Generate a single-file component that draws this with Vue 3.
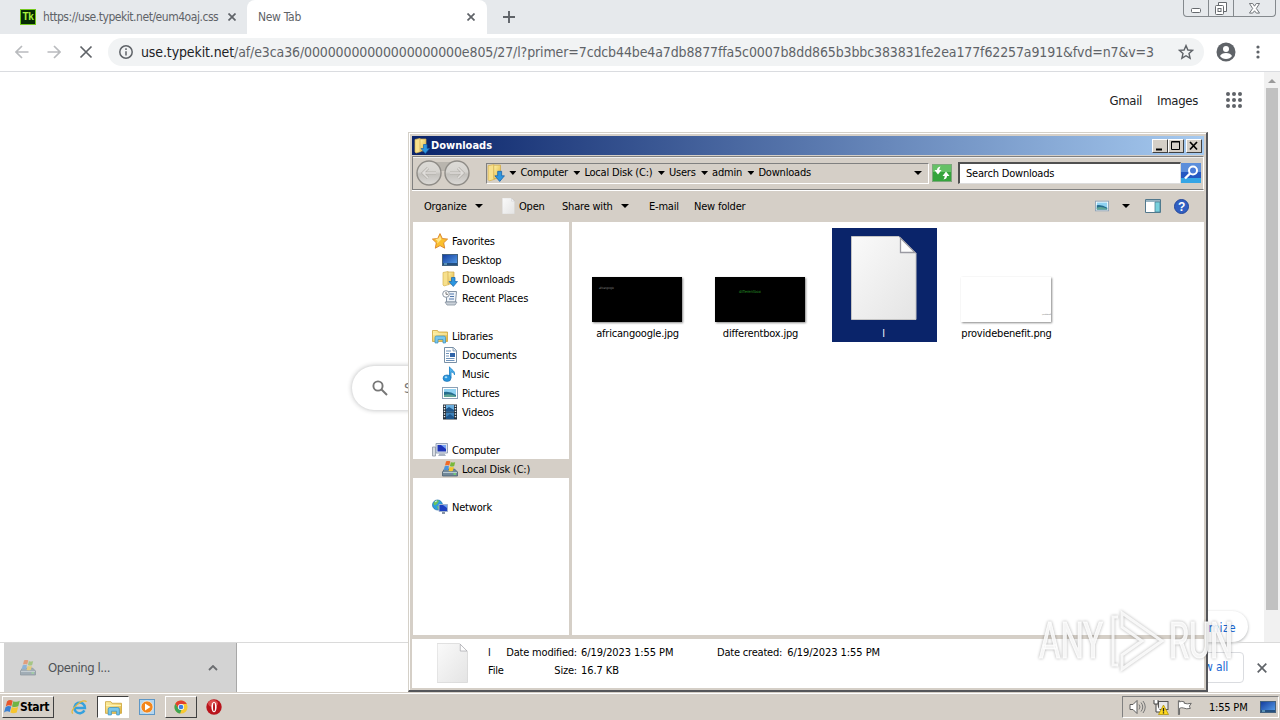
<template>
  <div class="screen">
    <svg class="icon-defs" xmlns="http://www.w3.org/2000/svg">
      <defs>
        <linearGradient id="gold" x1="0" y1="0" x2="1" y2="1">
          <stop offset="0" stop-color="#fff3a8" />
          <stop offset="1" stop-color="#dfb13c" />
        </linearGradient>
        <linearGradient id="paper" x1="0" y1="0" x2="1" y2="1">
          <stop offset="0" stop-color="#fafafa" />
          <stop offset="1" stop-color="#e4e4e4" />
        </linearGradient>
        <linearGradient id="blue" x1="0" y1="0" x2="1" y2="1">
          <stop offset="0" stop-color="#123a9c" />
          <stop offset="1" stop-color="#5aa5ee" />
        </linearGradient>
        <linearGradient id="orb" x1="0" y1="0" x2="0" y2="1">
          <stop offset="0" stop-color="#dddbd7" />
          <stop offset=".45" stop-color="#d6d4d0" />
          <stop offset=".55" stop-color="#c3c1bd" />
          <stop offset="1" stop-color="#dcdad7" />
        </linearGradient>
      </defs>
      <symbol id="i-star" viewBox="0 0 16 16">
        <path d="M8 .6l2.3 4.9 5.3.6-3.9 3.7 1 5.4L8 12.6l-4.7 2.6 1-5.4L.4 6.1l5.3-.6z" fill="#fbc02d" stroke="#d9822b" stroke-width=".9" />
        <path d="M8 2.8l1.5 3.4-4.4 4.6.5-2.9-2.4-2 3.2-.4z" fill="#ffe58a" />
      </symbol>
      <symbol id="i-desktop" viewBox="0 0 16 16">
        <rect x=".5" y="2.5" width="15" height="11" fill="url(#blue)" stroke="#42617e" />
        <path d="M1 11h14v2H1z" fill="#245080" />
        <path d="M2 11.5h3v1H2z" fill="#8fd0e8" />
      </symbol>
      <symbol id="i-downloads" viewBox="0 0 16 16">
        <path d="M1 1.5l5-1 1 1v12l-5 1.500-1-1z" fill="#f7e08c" stroke="#d7b451" stroke-width=".7" />
        <path d="M6 1h6v12H6z" fill="url(#gold)" stroke="#cfa84a" stroke-width=".7" />
        <path d="M9.500 6.500h3.500v4h2.500L11.300 15.500 7 10.500h2.500z" fill="#2d96e0" stroke="#1764ac" stroke-width=".7" />
      </symbol>
      <symbol id="i-recent" viewBox="0 0 16 16">
        <path d="M4.500 1.500h10l-1 10.500h-9z" fill="#eef3f8" stroke="#8694a4" />
        <path d="M3 12h12l-2 3H5z" fill="#cbd2da" stroke="#8792a0" stroke-width=".8" />
        <path d="M8 4h4M8 6.500h4M7 9h5" stroke="#5076ac" stroke-width="1.200" />
        <circle cx="4" cy="4" r="3.300" fill="#fff" stroke="#8d97a3" />
        <path d="M4 2v2.300h2" stroke="#555" fill="none" stroke-width=".8" />
      </symbol>
      <symbol id="i-library" viewBox="0 0 16 16">
        <path d="M.5 2.500h5l1 1.500h9v9.500H.5z" fill="url(#gold)" stroke="#cda53d" stroke-width=".8" />
        <path d="M1 6h14" stroke="#fff5b8" />
        <path d="M3 15V9.500q0-1.500 1.500-1.500h7.500q1.500 0 1.500 1.500V15h-2.500v-3.500h-5V15z" fill="#78c6ec" stroke="#3990bf" stroke-width=".7" />
      </symbol>
      <symbol id="i-document" viewBox="0 0 16 16">
        <path d="M2.500.5h9l3 3v12h-12z" fill="#fff" stroke="#7990a6" />
        <path d="M11 .5v3.500h3.500" fill="#dce6f0" stroke="#7990a6" stroke-width=".8" />
        <path d="M4 4h5M4 6.500h3M4 9h3M4 11.500h8.500M4 13.500h8.500" stroke="#6f93ba" />
        <path d="M8 6h5v4H8z" fill="#2f64a8" />
      </symbol>
      <symbol id="i-music" viewBox="0 0 16 16">
        <path d="M7.500 12V.8c1.200 3 5.500 3.200 5 8-.5-2-2-2.800-3.500-3V12z" fill="#4db1ec" stroke="#2387cb" stroke-width=".9" />
        <ellipse cx="5" cy="12.200" rx="4" ry="3.300" fill="#2794dc" stroke="#186cac" stroke-width=".6" />
        <ellipse cx="4" cy="11.300" rx="1.400" ry="1" fill="#a6dcf8" />
      </symbol>
      <symbol id="i-picture" viewBox="0 0 16 16">
        <rect x=".5" y="2.500" width="15" height="11" fill="#fff" stroke="#8ba1b6" />
        <path d="M2 4h12v8H2z" fill="#8fd2f2" />
        <path d="M2 7q6-1 12 3v2H2z" fill="#246c8d" />
        <path d="M2 10q5-2 12 1v1H2z" fill="#5fa595" />
      </symbol>
      <symbol id="i-video" viewBox="0 0 16 16">
        <path d="M1 .5h14v15H1z" fill="#25303b" />
        <path d="M4 1h8v6.500H4z" fill="#6aaede" />
        <path d="M4 8.500h8V15H4z" fill="#3f82ba" />
        <path d="M4 5l3-2 5 3v1.500H4zM4 13l4-3 4 3v2H4z" fill="#1d568c" />
        <path d="M2.500 1.500v13M13.500 1.500v13" stroke="#e8edf2" stroke-width="1.400" stroke-dasharray="1.400 1.200" />
      </symbol>
      <symbol id="i-computer" viewBox="0 0 16 16">
        <path d="M.5 5h3v9h-3z" fill="#d9dde3" stroke="#8d95a2" stroke-width=".8" />
        <path d="M4 1.500h11.500V11H4z" fill="#dfe5ee" stroke="#8c9ab0" stroke-width=".9" />
        <path d="M5.500 3H14v6.500H5.500z" fill="#1d34b8" />
        <path d="M9 3h5v4z" fill="#7aa5f4" />
        <path d="M7.500 11.500h5l1.500 2.500H6z" fill="#aab4c2" />
      </symbol>
      <symbol id="i-disk" viewBox="0 0 16 16">
        <path d="M2.500 8h10l3 3v4H.5v-4z" fill="#71899a" stroke="#4c616f" stroke-width=".8" />
        <path d="M1 11.500h14" stroke="#b7c8d2" />
        <path d="M11.500 13h2.500" stroke="#75e06d" stroke-width="1.400" />
        <path d="M4 .5q2.200-1.500 4.300 0L7.200 4.500Q5 3.500 3 4.500z" fill="#ef6b28" />
        <path d="M8.900.9q2.200 1 4.300 0l-1 4q-2.200 1-4.300 0z" fill="#78b83a" />
        <path d="M2.700 5.300q2.200-1.200 4.300 0L6 9.300q-2.200-1-4.300 0z" fill="#4a94dc" />
        <path d="M7.600 5.700q2.200 1 4.300 0l-1 4q-2.200 1-4.300 0z" fill="#f7c62b" />
      </symbol>
      <symbol id="i-network" viewBox="0 0 16 16">
        <circle cx="5.500" cy="6" r="5" fill="#2e9cdd" stroke="#1b6ea8" stroke-width=".7" />
        <path d="M3 2q3-1.500 4 0L5 5 2.500 6.500q-2-2 .5-4.500zM5 7l3 1-2 2.800z" fill="#6cc45c" />
        <path d="M3 3q1-1 2-1" stroke="#d9f5ff" />
        <path d="M7 5.500h8.500v7H7z" fill="#1c3fc0" stroke="#9fb1cc" />
        <path d="M11 6h4v3z" fill="#6d9df0" />
        <path d="M10 13h3v2h-3z" fill="#8793a6" />
      </symbol>
      <symbol id="i-flag4" viewBox="0 0 16 16">
        <path d="M3 2.500q2.500-2.500 5.700-.8L7.400 7Q4.500 5.500 1.800 7.500z" fill="#e8562a" />
        <path d="M9.300 2.200q3.200 1.500 6.500-.4l-1.500 5.400q-3.200 1.500-6.300.2z" fill="#71b443" />
        <path d="M1.500 8.200q2.700-2 5.700-.6L5.800 13Q3 11.500 0 13.500z" fill="#3a80d2" />
        <path d="M7.800 8.100q3.200 1.300 6.300-.2l-1.400 5.500q-3.200 1.400-6.300.2z" fill="#f7c52e" />
      </symbol>
      <symbol id="i-page" viewBox="0 0 66 84">
        <path d="M.5.5H48L65 17.500V83.500H.5z" fill="url(#paper)" stroke="#c4c4c4" />
        <path d="M49.500 2v14.500H64z" fill="#fdfdfd" stroke="#9a9aa2" stroke-width="1.300" />
      </symbol>
    </svg>

    <!-- browser -->
    <div class="browser">
      <div class="tab-strip">
        <div class="tab tab-first">
          <span class="tk">Tk</span>
          <span class="tab-title tab-title-url">https://use.typekit.net/eum4oaj.css</span>
          <svg class="tab-close" viewBox="0 0 8 8"><path d="M.5.5l7 7M7.500.5l-7 7" /></svg>
        </div>
        <div class="tab tab-active">
          <span class="tab-title">New Tab</span>
          <svg class="tab-close" viewBox="0 0 8 8"><path d="M.5.5l7 7M7.500.5l-7 7" /></svg>
        </div>
        <svg class="tab-plus" viewBox="0 0 12 12"><path d="M6 0v12M0 6h12" /></svg>
        <div class="window-buttons">
          <span class="wb wb-min"><svg width="10" height="5" viewBox="0 0 10 5"><rect x=".5" y=".5" width="9" height="4" rx="1" /></svg></span>
          <span class="wb wb-max"><svg width="12" height="13" viewBox="0 0 12 13"><path d="M3.500 3.500v-3h8v9h-3" /><rect x=".5" y="3.500" width="8" height="9" rx="1" /><rect x="3" y="6.500" width="3" height="3" /></svg></span>
          <span class="wb wb-close"><svg width="11" height="11" viewBox="0 0 12 12"><path d="M.5.500h3.500l2 3 2-3h3.500L8 6l3.500 5H8L6 8.500 4 11H.5L4 6z" /></svg></span>
        </div>
      </div>

      <div class="nav-bar">
        <svg class="nav-icon faded" viewBox="0 0 14 14"><path d="M13.500 7H1M7 1L1 7l6 6" /></svg>
        <svg class="nav-icon faded" viewBox="0 0 14 14"><path d="M.5 7H13M7 1l6 6-6 6" /></svg>
        <svg class="nav-icon" viewBox="0 0 14 14"><path d="M1.500 1.500l11 11M12.500 1.500l-11 11" /></svg>
        <div class="omnibox">
          <svg class="info-icon" viewBox="0 0 14 14">
            <circle cx="7" cy="7" r="6.200" />
            <path d="M7 6.200v4.300M7 3.300v1.600" />
          </svg>
          <span class="url"><span class="host">use.typekit.net</span>/af/e3ca36/00000000000000000000e805/27/l?primer=7cdcb44be4a7db8877ffa5c0007b8dd865b3bbc383831fe2ea177f62257a9191&amp;fvd=n7&amp;v=3</span>
          <svg class="bookmark" viewBox="0 0 16 16"><path d="M8 1.600l1.900 4.400 4.700.4-3.600 3.100 1.100 4.700L8 11.700l-4.100 2.500L5 9.500 1.400 6.400l4.700-.4z" /></svg>
        </div>
        <svg class="avatar" viewBox="0 0 20 20">
          <circle cx="10" cy="10" r="9.500" fill="#5f6368" />
          <circle cx="10" cy="7" r="3" fill="#fff" />
          <path d="M4 14q1.500-3 6-3t6 3q-2 3-6 3t-6-3z" fill="#fff" />
        </svg>
        <svg class="kebab" viewBox="0 0 4 14"><circle cx="2" cy="2" r="1.600" /><circle cx="2" cy="7" r="1.600" /><circle cx="2" cy="12" r="1.600" /></svg>
      </div>

      <div class="page">
        <div class="page-body">
          <div class="page-links">
            <span class="gmail">Gmail</span>
            <span class="images">Images</span>
            <svg class="apps" viewBox="0 0 16 16">
              <circle v-for="n in 9" :key="n" :cx="2 + ((n - 1) % 3) * 6" :cy="2 + Math.floor((n - 1) / 3) * 6" r="2" />
            </svg>
          </div>
          <div class="search-pill">
            <svg class="magnifier" viewBox="0 0 16 16"><circle cx="6" cy="6" r="4.600" /><path d="M9.500 9.500l5.500 5.500" /></svg>
            <span>S</span>
          </div>
          <div class="customize">Customize</div>
        </div>
        <div class="scrollbar">
          <span class="scroll-arrow"></span>
          <span class="scroll-thumb"></span>
        </div>
      </div>

      <div class="shelf">
        <div class="shelf-item">
          <svg class="shelf-icon"><use href="#i-disk" /></svg>
          <span>Opening l...</span>
          <svg class="chevron" viewBox="0 0 10 6"><path d="M1 5l4-4 4 4" /></svg>
        </div>
        <div class="show-all">Show all</div>
        <svg class="shelf-close" viewBox="0 0 10 10"><path d="M.7.7l8.600 8.600M9.300.7L.7 9.300" /></svg>
      </div>
    </div>

    <!-- explorer window -->
    <div class="explorer">
      <div class="title-bar">
        <svg class="icon16"><use href="#i-downloads" /></svg>
        <span class="title-text">Downloads</span>
        <span class="caption-btn"><svg viewBox="0 0 14 12"><path d="M3 9.500h6" stroke="#000" stroke-width="2" /></svg></span>
        <span class="caption-btn"><svg viewBox="0 0 14 12"><path d="M2.500 2v7.500h8V1.500h-8M2 2h9" stroke="#000" fill="none" /></svg></span>
        <span class="caption-btn caption-close"><svg viewBox="0 0 14 12"><path d="M3 2l7 7.500M10 2L3 9.500" stroke="#000" stroke-width="1.700" /></svg></span>
      </div>

      <div class="address-row">
        <svg class="nav-orbs" viewBox="0 0 56 28">
          <path d="M14 3h28v9H14z" fill="#b9b5ae" />
          <g fill="url(#orb)" stroke="#8f8c87" stroke-width="1.400">
            <circle cx="14" cy="14" r="12" />
            <circle cx="42" cy="14" r="12" />
          </g>
          <path d="M21 14H8M13 9l-5 5 5 5M35 14h13M43 9l5 5-5 5" fill="none" stroke="#b4b1ac" stroke-width="3" />
          <path d="M21 14H8M13 9l-5 5 5 5M35 14h13M43 9l5 5-5 5" fill="none" stroke="#dfddda" stroke-width="1.600" />
        </svg>
        <div class="address">
          <svg class="address-icon"><use href="#i-downloads" /></svg>
          <template v-for="crumb in crumbs" :key="crumb">
            <i class="caret small"></i>
            <span class="crumb">{{ crumb }}</span>
          </template>
          <i class="caret address-caret"></i>
        </div>
        <svg class="refresh" viewBox="0 0 20 18">
          <rect x=".5" y=".5" width="19" height="17" fill="#35a43c" stroke="#7ea77c" />
          <path d="M1 1h18v7H1z" fill="#65c166" />
          <path d="M8.500 2.500Q5 3 5 6H2.500L6 10.500 9.500 6H7.300q0-1.500 1.200-3.500zM11.500 15.500q3.500-.5 3.500-3.500h2.500L14 7.500 10.500 12h2.200q0 1.500-1.200 3.500z" fill="#fff" />
        </svg>
        <div class="search-box">Search Downloads</div>
        <svg class="search-go" viewBox="0 0 20 20">
          <rect width="20" height="20" fill="#2458c2" />
          <path d="M0 0h20v9H0z" fill="#5c8edb" />
          <path d="M0 15h20v5H0z" fill="#35a5e5" />
          <circle cx="12" cy="7.500" r="4" fill="#4a7cd8" stroke="#fff" stroke-width="2" />
          <path d="M9 10.500L4 15.500" stroke="#fff" stroke-width="2.400" />
        </svg>
      </div>

      <div class="command-bar">
        <span class="cmd cmd-organize">Organize</span>
        <i class="caret"></i>
        <svg class="cmd-page"><use href="#i-page" /></svg>
        <span class="cmd cmd-open">Open</span>
        <span class="cmd cmd-share">Share with</span>
        <i class="caret"></i>
        <span class="cmd cmd-email">E-mail</span>
        <span class="cmd cmd-new">New folder</span>
        <svg class="view-icon"><use href="#i-picture" /></svg>
        <i class="caret view-caret"></i>
        <svg class="pane-icon" viewBox="0 0 16 14">
          <path d="M.5.5h15v13H.5z" fill="#fff" stroke="#52788c" />
          <path d="M1 1h14v2H1z" fill="#98b4c2" />
          <path d="M10 3h5v10h-5z" fill="#78d0dc" stroke="#4b8295" stroke-width=".8" />
        </svg>
        <span class="help">?</span>
      </div>

      <div class="explorer-main">
        <div class="sidebar">
          <div v-for="group in groups" :key="group.name" class="group">
            <div class="side-row">
              <svg class="icon16"><use :href="'#i-' + group.icon" /></svg>
              <span>{{ group.name }}</span>
            </div>
            <div
              v-for="item in group.items"
              :key="item.name"
              class="side-row child"
              :class="{ selected: item.name === selectedPlace }"
              @click="selectedPlace = item.name"
            >
              <svg class="icon16"><use :href="'#i-' + item.icon" /></svg>
              <span>{{ item.name }}</span>
            </div>
          </div>
        </div>

        <div class="files">
          <div
            v-for="file in files"
            :key="file.name"
            class="file"
            :class="{ chosen: file.name === selectedFile }"
            @click="selectedFile = file.name"
          >
            <svg v-if="file.kind === 'page'" class="big-page"><use href="#i-page" /></svg>
            <div v-else class="thumb" :class="file.kind">
              <span>{{ file.mark }}</span>
            </div>
            <div class="file-name">{{ file.name }}</div>
          </div>
        </div>
      </div>

      <div class="details">
        <svg class="details-page"><use href="#i-page" /></svg>
        <div class="details-name">
          <span>l</span>
          <span>File</span>
        </div>
        <div class="details-labels">
          <span>Date modified:</span>
          <span>Size:</span>
        </div>
        <div class="details-values">
          <span>6/19/2023 1:55 PM</span>
          <span>16.7 KB</span>
        </div>
        <div class="details-created">Date created: <span>6/19/2023 1:55 PM</span></div>
      </div>
    </div>

    <svg class="watermark" viewBox="0 0 210 80">
      <g class="wm-shape">
        <text x="9" y="55" textLength="64" lengthAdjust="spacingAndGlyphs">ANY</text>
        <text x="139" y="55" textLength="64" lengthAdjust="spacingAndGlyphs">RUN</text>
        <path class="wm-line" d="M92 10L132 38 92 66V52l20-14-20-14z" />
        <path class="wm-line" d="M88 14h-5v48h5" />
      </g>
    </svg>

    <!-- taskbar -->
    <div class="taskbar">
      <div class="start">
        <svg class="icon16"><use href="#i-flag4" /></svg>
        <span>Start</span>
      </div>
      <svg class="task-icon ie" viewBox="0 0 18 18">
        <path d="M14.200 12A5.600 5.600 0 1 1 14.800 9.500H5" fill="none" stroke="#35a1de" stroke-width="2.600" />
        <path d="M2 15.500Q-1 13 6 6.500T16.500 3" fill="none" stroke="#e6b93c" stroke-width="1.300" />
      </svg>
      <div class="task-btn pressed"><svg class="task-lib"><use href="#i-library" /></svg></div>
      <svg class="task-icon wmp" viewBox="0 0 16 16">
        <rect x=".5" y=".5" width="15" height="15" fill="#b4d6ef" stroke="#5e97c6" />
        <circle cx="8" cy="8" r="6" fill="#f3861c" stroke="#fff" stroke-width=".6" />
        <path d="M6 4.500L11.500 8 6 11.500z" fill="#fff" />
      </svg>
      <div class="task-btn">
        <svg class="task-chrome" viewBox="0 0 16 16">
          <circle cx="8" cy="8" r="7.500" fill="#f8c931" />
          <path d="M1.500 4.300A7.500 7.500 0 0 1 14.600 4.500H8L5 9.500z" fill="#e2402f" />
          <path d="M1.500 4.300L5 9.700l3.500 1.500L7 15.500A7.500 7.500 0 0 1 1.500 4.300z" fill="#3da454" />
          <circle cx="8" cy="8" r="3.500" fill="#fff" />
          <circle cx="8" cy="8" r="2.700" fill="#3f7ee0" />
        </svg>
      </div>
      <svg class="task-icon opera" viewBox="0 0 16 16">
        <circle cx="8" cy="8" r="7.700" fill="#b9141b" />
        <ellipse cx="7" cy="4.500" rx="5" ry="3.500" fill="#dc4c4c" />
        <ellipse cx="8" cy="8" rx="2.600" ry="5.300" fill="#fff" />
        <ellipse cx="8" cy="8" rx="1" ry="4.300" fill="#b9141b" />
      </svg>
      <div class="tray">
        <svg class="speaker" viewBox="0 0 17 14">
          <path d="M1 4.500h3l4-4v13l-4-4H1z" fill="#fff" stroke="#5c5c5c" />
          <path d="M10 4.500q2 2.500 0 5M12 2.500q3.500 4.500 0 9M14 1q4.500 6 0 12" fill="none" stroke="#777" />
        </svg>
        <svg class="net" viewBox="0 0 16 16">
          <rect x="5.500" y="2.500" width="9.500" height="8" fill="#e8e8e8" stroke="#555" />
          <path d="M1 1v4h4V1M3 5v8h5" fill="#fff" stroke="#444" />
          <path d="M10.500 6l5 9.500h-10z" fill="#ffd91c" stroke="#a88b00" stroke-width=".7" />
          <path d="M10.500 9v3.500M10.500 13.300v1.200" stroke="#222" stroke-width="1.300" />
        </svg>
        <svg class="flag" viewBox="0 0 16 16"><path d="M1.500 15.500V.8h1.200V2q2.500-1.200 5 0v1.500q3 1.200 7.500 0l-2 3 1 2.500q-4 1-7.500-.5-1.500-.7-4 .3v6.700z" fill="#fff" stroke="#555" stroke-width=".9" /></svg>
        <span class="clock">1:55 PM</span>
        <svg class="icon16"><use href="#i-desktop" /></svg>
      </div>
    </div>
  </div>
</template>

<script setup>
import { ref } from "vue";

const selectedPlace = ref("Local Disk (C:)");
const selectedFile = ref("l");

const crumbs = ["Computer", "Local Disk (C:)", "Users", "admin", "Downloads"];

const groups = [
  {
    name: "Favorites",
    icon: "star",
    items: [
      { name: "Desktop", icon: "desktop" },
      { name: "Downloads", icon: "downloads" },
      { name: "Recent Places", icon: "recent" },
    ],
  },
  {
    name: "Libraries",
    icon: "library",
    items: [
      { name: "Documents", icon: "document" },
      { name: "Music", icon: "music" },
      { name: "Pictures", icon: "picture" },
      { name: "Videos", icon: "video" },
    ],
  },
  {
    name: "Computer",
    icon: "computer",
    items: [{ name: "Local Disk (C:)", icon: "disk" }],
  },
  { name: "Network", icon: "network", items: [] },
];

const files = [
  { name: "africangoogle.jpg", kind: "dark", mark: "africangoogle" },
  { name: "differentbox.jpg", kind: "dark green", mark: "differentbox" },
  { name: "l", kind: "page" },
  { name: "providebenefit.png", kind: "light", mark: "providebenefit" },
];
</script>

<style>
body {
  margin: 0;
  overflow: hidden;
}
</style>

<style scoped>
.screen {
  position: relative;
  width: 1280px;
  height: 720px;
  overflow: hidden;
  display: flex;
  flex-direction: column;
  background: #fff;
  color: #000;
  font-family: "DejaVu Sans Condensed", "DejaVu Sans", sans-serif;
  font-stretch: condensed;
  font-size: 11px;
  letter-spacing: -0.2px;
  white-space: nowrap;
}

.screen * {
  box-sizing: border-box;
}

.screen svg {
  flex: none;
  display: block;
}

.icon-defs {
  position: absolute;
  width: 0;
  height: 0;
}

.icon16 {
  width: 16px;
  height: 16px;
}

/* browser */
.browser {
  height: 692px;
  display: flex;
  flex-direction: column;
}

.tab-strip {
  height: 34px;
  background: #e6e9ec;
  display: flex;
  align-items: center;
}

.tab {
  display: flex;
  align-items: center;
  height: 34px;
  color: #5f6368;
  font-size: 12px;
  letter-spacing: -0.3px;
}

.tab-first {
  width: 247px;
  padding-left: 20px;
}

.tab-active {
  width: 240px;
  padding-left: 11px;
  background: #fff;
  border-radius: 8px 8px 0 0;
}

.tk {
  width: 16px;
  height: 16px;
  margin-right: 7px;
  border: 1px solid #74c81e;
  background: #062b05;
  color: #a8ef3c;
  font: bold 10px/14px "Liberation Sans", sans-serif;
  text-align: center;
}

.tab-title-url {
  width: 176px;
  letter-spacing: -0.46px;
}

.tab-close {
  width: 8px;
  height: 8px;
  margin-left: 9px;
  stroke: #5f6368;
  stroke-width: 1.7;
}

.tab-active .tab-close {
  margin-left: auto;
  margin-right: 12px;
}

.tab-plus {
  width: 12px;
  height: 12px;
  margin-left: 16px;
  stroke: #5f6368;
  stroke-width: 1.9;
}

.window-buttons {
  display: flex;
  align-self: flex-start;
  height: 17px;
  width: 93px;
  margin-left: auto;
  margin-right: 4px;
  border: 1px solid #84898d;
  border-top: 0;
  border-radius: 0 0 4px 4px;
}

.wb {
  width: 25px;
  display: flex;
  align-items: center;
  justify-content: center;
  border-right: 1px solid #84898d;
}

.wb-close {
  flex: 1;
  border-right: 0;
}

.wb svg {
  fill: #fff;
  stroke: #666a6e;
}

.wb-min svg {
  margin-top: 5px;
}

.nav-bar {
  height: 38px;
  display: flex;
  align-items: center;
  padding: 0 20px 2px 15px;
  border-bottom: 1px solid #dadce0;
  background: #fff;
}

.nav-icon {
  width: 14px;
  height: 14px;
  margin-right: 18px;
  fill: none;
  stroke: #5f6368;
  stroke-width: 1.7;
}

.nav-icon.faded {
  stroke: #b9bbbe;
}

.omnibox {
  width: 1097px;
  height: 28px;
  margin-left: -3px;
  padding: 0 10px 0 11px;
  border-radius: 14px;
  background: #f1f3f4;
  display: flex;
  align-items: center;
}

.info-icon {
  width: 14px;
  height: 14px;
  fill: none;
  stroke: #5f6368;
  stroke-width: 1.5;
}

.url {
  margin-left: 8px;
  color: #5f6368;
  font-size: 14px;
  letter-spacing: -0.12px;
}

.host {
  color: #202124;
}

.bookmark {
  width: 16px;
  height: 16px;
  margin-left: auto;
  fill: none;
  stroke: #5f6368;
  stroke-width: 1.4;
}

.avatar {
  width: 20px;
  height: 20px;
  margin-left: 12px;
}

.kebab {
  width: 4px;
  height: 14px;
  margin-left: 20px;
  fill: #5f6368;
}

.page {
  height: 570px;
  display: flex;
}

.page-body {
  flex: 1;
  display: flex;
  flex-direction: column;
}

.page-links {
  display: flex;
  align-items: center;
  justify-content: flex-end;
  height: 16px;
  margin: 20px 22px 0 0;
  color: #202124;
  font-size: 13px;
  letter-spacing: -0.3px;
}

.images {
  margin: 0 28px 0 15px;
}

.apps {
  width: 16px;
  height: 16px;
  fill: #5f6368;
}

.search-pill {
  width: 560px;
  height: 44px;
  margin: 258px 0 0 352px;
  padding-left: 20px;
  border-radius: 22px;
  box-shadow: 0 0 5px rgba(32, 33, 36, 0.32);
  display: flex;
  align-items: center;
  color: #757575;
  font-size: 14px;
}

.magnifier {
  width: 16px;
  height: 16px;
  margin-right: 16px;
  fill: none;
  stroke: #777;
  stroke-width: 1.9;
}

.customize {
  width: 110px;
  height: 31px;
  margin: auto 16px 0 auto;
  padding-right: 12px;
  border-radius: 16px;
  box-shadow: 0 1px 3px rgba(60, 64, 67, 0.4);
  color: #1a67d2;
  font-size: 12px;
  line-height: 34px;
  text-align: right;
  letter-spacing: 0.4px;
}

.scrollbar {
  width: 16px;
  background: #f1f1f1;
  display: flex;
  flex-direction: column;
  align-items: center;
}

.scroll-arrow {
  margin: 7px 0 5px;
  border: 4px solid transparent;
  border-top: 0;
  border-bottom-color: #9a9a9a;
}

.scroll-thumb {
  width: 12px;
  height: 522px;
  background: #c1c1c1;
}

.shelf {
  height: 50px;
  padding-left: 4px;
  border-top: 1px solid #dadada;
  display: flex;
  align-items: center;
}

.shelf-item {
  width: 233px;
  height: 49px;
  padding: 0 18px 0 16px;
  background: #d3d3d3;
  border-right: 1px solid #a8a8a8;
  display: flex;
  align-items: center;
  color: #4f5256;
  font-size: 13px;
  letter-spacing: -0.45px;
}

.shelf-icon {
  width: 16px;
  height: 16px;
  margin-right: 12px;
  opacity: 0.5;
}

.chevron {
  width: 10px;
  height: 6px;
  margin-left: auto;
  fill: none;
  stroke: #6b6d70;
  stroke-width: 1.8;
}

.show-all {
  width: 90px;
  height: 31px;
  margin-left: auto;
  padding-right: 15px;
  border: 1px solid #dadce0;
  border-radius: 4px;
  color: #1a67d2;
  font-size: 12px;
  line-height: 29px;
  text-align: right;
}

.shelf-close {
  width: 10px;
  height: 10px;
  margin: 0 13px;
  stroke: #5f6368;
  stroke-width: 1.7;
}

/* explorer window */
.explorer {
  position: absolute;
  left: 408px;
  top: 132px;
  width: 800px;
  height: 560px;
  padding: 2px 1px 2px 2px;
  border: 2px solid #d4d0c8;
  border-right-color: #55565a;
  border-bottom-color: #55565a;
  border-width: 1px 2px 2px 1px;
  background: #d5cfc7;
  box-shadow: inset 1px 1px 0 #fff;
  display: flex;
  flex-direction: column;
}

.explorer > div {
  flex: none;
}

.title-bar {
  height: 19px;
  margin: 1px 1px 0;
  padding: 0 2px 0 2px;
  background: linear-gradient(to right, #0a246a, #a6caf0);
  display: flex;
  align-items: center;
}

.title-text {
  flex: 1;
  margin-left: 1px;
  color: #fff;
  font-weight: bold;
  letter-spacing: 0;
}

.caption-btn {
  width: 16px;
  height: 14px;
  background: #d5cfc7;
  border: 1px solid #fff;
  border-right-color: #404040;
  border-bottom-color: #404040;
}

.caption-btn svg {
  width: 14px;
  height: 12px;
}

.caption-close {
  margin-left: 2px;
}

.address-row {
  height: 34px;
  margin: 1px;
  border: 1px solid #808080;
  border-right-color: #fff;
  border-bottom-color: #808080;
  box-shadow: 0 1px 0 #fff, inset 0 1px 0 #eee;
  display: flex;
  align-items: center;
}

.nav-orbs {
  width: 56px;
  height: 28px;
  margin-left: 2px;
}

.address {
  width: 443px;
  height: 21px;
  margin-left: 15px;
  border: 1px solid #808080;
  border-right-color: #fff;
  border-bottom-color: #fff;
  display: flex;
  align-items: center;
}

.address-icon {
  width: 18px;
  height: 18px;
  margin-right: -1px;
}

.caret {
  flex: none;
  width: 8px;
  height: 4px;
  background: #000;
  clip-path: polygon(0 0, 100% 0, 50% 100%);
}

.caret.small {
  width: 7px;
  height: 4px;
  margin: 0 4px 0 5.4px;
}

.address-caret {
  margin-left: auto;
  margin-right: 6px;
}

.crumb {
  letter-spacing: -0.2px;
  line-height: 17px;
  margin-bottom: 1px;
}

.refresh {
  width: 20px;
  height: 18px;
  margin-left: 3px;
}

.search-box {
  width: 223px;
  height: 22px;
  margin-left: 6px;
  padding-left: 6px;
  border: 1px solid #505050;
  border-width: 2px 1px 1px 2px;
  border-right-color: #ddd;
  border-bottom-color: #ddd;
  background: #fff;
  line-height: 19px;
}

.search-go {
  width: 20px;
  height: 20px;
}

.command-bar {
  height: 31px;
  padding: 0 0 1px 13px;
  display: flex;
  align-items: center;
}

.cmd-organize {
  width: 51px;
}

.cmd-page {
  width: 13px;
  height: 16px;
  margin: 0 4px 0 19px;
}

.cmd-open {
  width: 43px;
}

.cmd-share {
  width: 59px;
}

.cmd-email {
  width: 45px;
  margin-left: 20px;
}

.view-icon {
  width: 14px;
  height: 14px;
  margin-left: auto;
}

.view-caret {
  margin: 0 15px 0 13px;
}

.pane-icon {
  width: 16px;
  height: 14px;
}

.help {
  width: 15px;
  height: 15px;
  margin: 0 16px 0 13px;
  border: 1px solid #24479a;
  border-radius: 50%;
  background: #315fc2;
  color: #fff;
  font: bold 12px/14px "Liberation Sans", sans-serif;
  text-align: center;
}

.explorer-main {
  height: 413px;
  margin: 0 1px;
  background: #fff;
  display: flex;
}

.sidebar {
  width: 160px;
  padding-top: 9px;
  border-left: 1px solid #d5cfc7;
  border-right: 3px solid #d5cfc7;
}

.group {
  margin-bottom: 19px;
}

.side-row {
  height: 19px;
  padding-left: 19px;
  display: flex;
  align-items: center;
  gap: 4px;
}

.side-row span {
  line-height: 19px;
  padding-top: 1px;
}

.side-row.child {
  padding-left: 29px;
}

.side-row.selected {
  background: #d5cfc7;
}

.files {
  display: flex;
  padding: 6px 0 0 13px;
  gap: 18px;
}

.file {
  width: 105px;
  height: 114px;
  display: flex;
  flex-direction: column;
  align-items: center;
  justify-content: flex-end;
}

.file-name {
  height: 16px;
  line-height: 15px;
  margin-top: 4px;
}

.file.chosen {
  margin: 0 -1px 0 1px;
  padding-right: 2px;
  background: #0a246a;
  color: #fff;
}

.big-page {
  width: 66px;
  height: 84px;
  margin-bottom: 2px;
}

.thumb {
  width: 90px;
  height: 45px;
  margin-right: 1px;
  box-shadow: 1px 1px 2px #888;
  font-size: 3px;
  line-height: 4px;
  letter-spacing: -0.3px;
}

.thumb.dark {
  background: #000;
  color: #777;
  padding: 9px 0 0 7px;
}

.thumb.green {
  color: #279327;
  font-size: 4px;
  letter-spacing: 0;
  padding: 13px 0 0 24px;
}

.thumb.light {
  background: #fff;
  color: #999;
  text-align: right;
  font-size: 2px;
  padding-top: 35px;
}

.details {
  height: 49px;
  margin: 4px 1px 0;
  background: #fff;
  display: flex;
}

.details-page {
  width: 31px;
  height: 40px;
  margin: 4px 20px 0 25px;
}

.details > div {
  line-height: 18px;
  padding-top: 5px;
}

.details-name,
.details-labels,
.details-values {
  display: flex;
  flex-direction: column;
}

.details-name {
  width: 18px;
}

.details-labels {
  width: 71px;
  align-items: flex-end;
}

.details-values {
  width: 140px;
  padding-left: 4px;
  letter-spacing: -0.08px;
}

.details-created span {
  margin-left: 2px;
  letter-spacing: -0.05px;
}

/* watermark */
.watermark {
  position: absolute;
  left: 1030px;
  top: 603px;
  width: 210px;
  height: 80px;
}

.wm-shape {
  fill: rgba(255, 255, 255, 0.85);
  stroke: rgba(255, 255, 255, 0.85);
  stroke-width: 1.2;
  font: 50px "Roboto", sans-serif;
  letter-spacing: 0;
  filter: drop-shadow(0 0 1.5px rgba(0, 0, 0, 0.35));
}

.wm-line {
  fill: none;
  stroke-width: 3;
}

/* taskbar */
.taskbar {
  height: 28px;
  padding: 1px 1px 0 2px;
  border-top: 1px solid #d5cfc7;
  background: #d5cfc7;
  box-shadow: inset 0 1px 0 #fff;
  display: flex;
  align-items: center;
}

.start {
  width: 52px;
  height: 22px;
  padding-left: 1px;
  border: 1px solid #fff;
  border-right-color: #404040;
  border-bottom-color: #404040;
  display: flex;
  align-items: center;
  font-weight: bold;
  font-size: 12px;
  letter-spacing: -0.35px;
}

.ie {
  width: 17px;
  height: 17px;
  margin: 0 9px 0 17px;
}

.task-btn {
  width: 32px;
  height: 22px;
  border: 1px solid #fff;
  border-right-color: #404040;
  border-bottom-color: #404040;
  display: flex;
  align-items: center;
  justify-content: center;
}

.task-btn.pressed {
  background: #fff;
  border-color: #404040 #fff #fff #404040;
}

.task-lib {
  width: 17px;
  height: 17px;
}

.wmp {
  width: 16px;
  height: 16px;
  margin: 0 10px;
}

.task-chrome {
  width: 14px;
  height: 14px;
}

.opera {
  width: 16px;
  height: 16px;
  margin-left: 9px;
}

.tray {
  width: 157px;
  height: 22px;
  margin-left: auto;
  padding-left: 6px;
  border: 1px solid #808080;
  border-right-color: #fff;
  border-bottom-color: #fff;
  display: flex;
  align-items: center;
}

.speaker {
  width: 17px;
  height: 14px;
}

.net {
  width: 16px;
  height: 16px;
  margin: 0 7px;
}

.flag {
  width: 17px;
  height: 15px;
}

.clock {
  width: 51px;
  margin-left: 16px;
}
</style>
